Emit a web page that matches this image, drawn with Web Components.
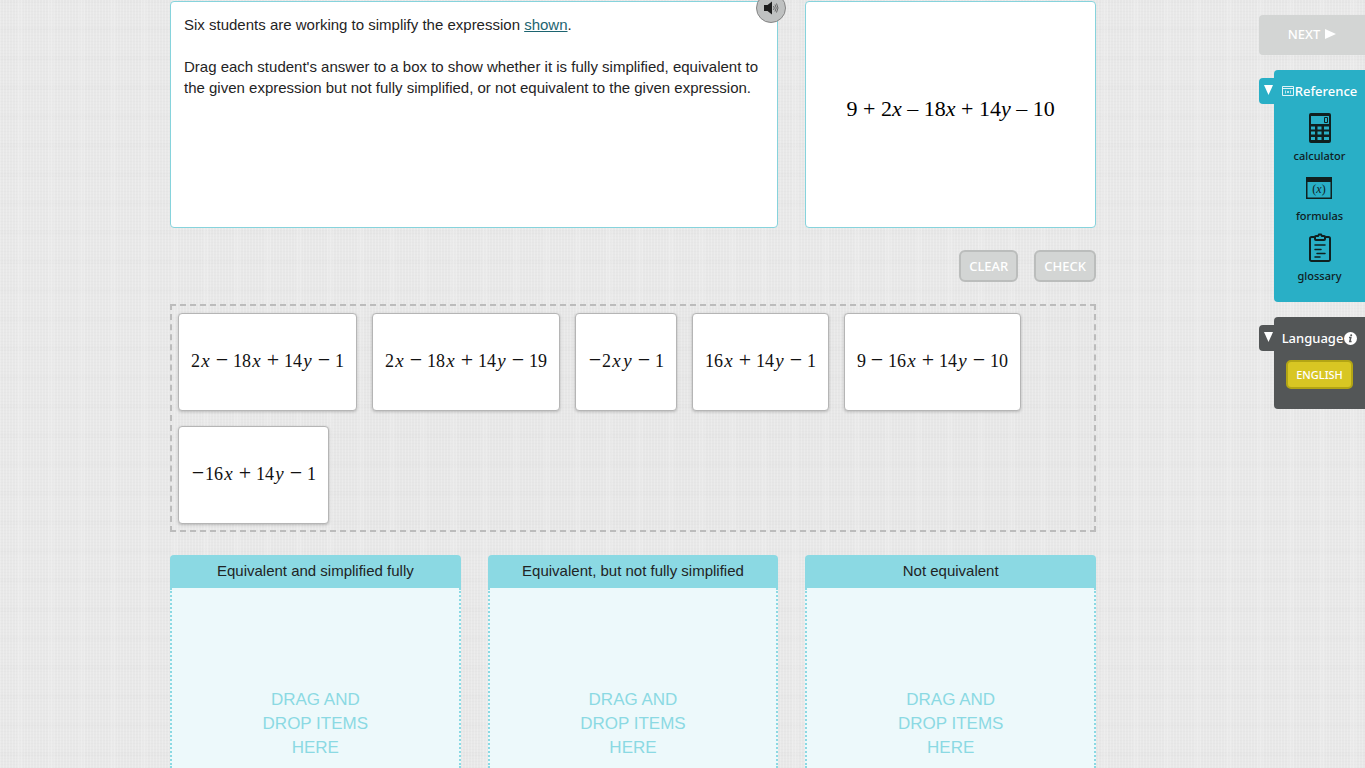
<!DOCTYPE html>
<html lang="en">
<head>
<meta charset="utf-8">
<meta name="viewport" content="width=device-width, initial-scale=1">
<title>Simplify the expression</title>
<style>
  body {
    margin: 0;
    height: 100vh;
    overflow: hidden;
    color: #1f2425;
    font: 15px/21px "Liberation Sans", Arial, sans-serif;
    --ui-font: "Noto Sans", sans-serif;
    --aqua: #8bd9e3;
    /* woven paper: a few thread sets with periods that do not line up */
    background:
      repeating-linear-gradient(90deg, rgba(255,255,255,.2) 0 1px, transparent 1px 3px),
      repeating-linear-gradient(90deg, transparent 0 17px, rgba(255,255,255,.1) 17px 23px, transparent 23px 31px),
      repeating-linear-gradient(0deg, rgba(0,0,0,.012) 0 1px, transparent 1px 3px),
      repeating-linear-gradient(0deg, transparent 0 11px, rgba(0,0,0,.006) 11px 16px, transparent 16px 29px),
      #e8e8e8;
  }
  a { color: #1c6470; }
  p { margin: 0 0 21px; }
</style>
</head>
<body>

<task-page>
  <prompt-panel>
    <p>Six students are working to simplify the expression <a href="#expression">shown</a>.</p>
    <p>Drag each student's answer to a box to show whether it is fully simplified, equivalent to the given expression but not fully simplified, or not equivalent to the given expression.</p>
  </prompt-panel>
  <given-expression id="expression">9 + 2<i>x</i> – 18<i>x</i> + 14<i>y</i> – 10</given-expression>

  <task-button slot="actions">CLEAR</task-button>
  <task-button slot="actions">CHECK</task-button>

  <answer-card slot="answers" expr="2x−18x+14y−1"></answer-card>
  <answer-card slot="answers" expr="2x−18x+14y−19"></answer-card>
  <answer-card slot="answers" expr="−2xy−1"></answer-card>
  <answer-card slot="answers" expr="16x+14y−1"></answer-card>
  <answer-card slot="answers" expr="9−16x+14y−10"></answer-card>
  <answer-card slot="answers" expr="−16x+14y−1"></answer-card>

  <drop-zone slot="zones">Equivalent and simplified fully</drop-zone>
  <drop-zone slot="zones">Equivalent, but not fully simplified</drop-zone>
  <drop-zone slot="zones">Not equivalent</drop-zone>

  <next-button slot="tools">NEXT</next-button>
  <side-panel slot="tools" label="Reference">
    <svg slot="before" width="12" height="10" viewBox="0 0 12 10" fill="none" stroke="#fff" stroke-opacity=".85">
      <path d="M.5.5h11v9H.5zM.5 2.5h11"/>
      <path stroke-width=".8" d="M3.5 4.5v3M8.5 4.5v3M5 5l2 2M7 5L5 7"/>
    </svg>
    <ref-tool name="calculator">
      <svg width="24" height="30" viewBox="0 0 24 30" fill="#10201f">
        <path fill-rule="evenodd" d="M3 0h18a2 2 0 0 1 2 2v26a2 2 0 0 1-2 2H3a2 2 0 0 1-2-2V2a2 2 0 0 1 2-2zM3 3v8h18V3zM3 13.500v3h4v-3zm6.500 0v3h4v-3zm6.500 0v3h5v-3zM3 18.500v3h4v-3zm6.500 0v3h4v-3zm6.500 0v3h5v-3zM3 24v3h4v-3zm6.500 0v3h4v-3zm6.500 0v3h5v-3z"/>
        <path fill="none" stroke="#10201f" d="M16.500 4.500h3v5h-3z"/>
      </svg>
    </ref-tool>
    <ref-tool name="formulas">
      <svg width="26" height="22" viewBox="0 0 26 22">
        <path fill="#10201f" fill-rule="evenodd" d="M0 0h26v22H0zM1.500 5v15.500h23V5z"/>
        <text x="13" y="16" text-anchor="middle" font-family="Liberation Serif, serif" font-size="12" fill="#10201f">(<tspan font-style="italic">x</tspan>)</text>
      </svg>
    </ref-tool>
    <ref-tool name="glossary">
      <svg width="24" height="30" viewBox="0 0 24 30" fill="none" stroke="#10201f" stroke-width="2" stroke-linecap="round">
        <path d="M6 4H3.500A1.500 1.500 0 0 0 2 5.500v21A1.500 1.500 0 0 0 3.500 28h17a1.500 1.500 0 0 0 1.500-1.500v-21A1.500 1.500 0 0 0 20.500 4H18"/>
        <path d="M8 3h2l1-1.500h2L14 3h2a1 1 0 0 1 1 1v2a1 1 0 0 1-1 1H8a1 1 0 0 1-1-1V4a1 1 0 0 1 1-1z"/>
        <path stroke-width="1.500" d="M7 12h10M7 16.500h6M9 20.500h8M7 24h5"/>
      </svg>
    </ref-tool>
  </side-panel>
  <side-panel slot="tools" label="Language" tone="dark">
    <svg slot="after" width="13" height="13" viewBox="0 0 13 13">
      <circle cx="6.500" cy="6.500" r="6.500" fill="#fff"/>
      <path fill="none" stroke="#535657" stroke-width="1.500" d="M5 5.500h1.800L5.800 9.600h1.800"/>
      <circle cx="7.200" cy="3.200" r="1" fill="#535657"/>
    </svg>
    <language-button>ENGLISH</language-button>
  </side-panel>
</task-page>

<script>
class Base extends HTMLElement {
  constructor(){
    super();
    this.attachShadow({mode:'open'})
  }
  connectedCallback(){
    this.shadowRoot.innerHTML = `<style>${this.style_()}</style>${this.html()}`
  }
}

customElements.define('task-page', class extends Base {
  style_(){
    return `
    :host{
      display:grid;
      grid-template-columns:minmax(0, 1fr) 99px;
      height:100%;
    }
    main{
      display:flex;
      flex-direction:column;
      box-sizing:border-box;
      width:100%;
      max-width:926px;
      margin:0 auto;
      padding-top:1px;
    }
    .row{
      display:grid;
      grid-template-columns:repeat(3, minmax(0, 1fr));
      gap:27px;
    }
    .top{ min-height:227px; }
    .actions{
      display:flex;
      justify-content:flex-end;
      gap:16px;
      margin:22px 0;
    }
    .answers{
      display:flex;
      flex-wrap:wrap;
      gap:15px;
      padding:7px 6px 6px;
      border:2px dashed #bcbcbc;
      background:rgba(0,0,0,.005);
    }
    .zones{
      flex:1;
      margin-top:23px;
    }
    /* the tab handles reach over the edge of the column */
    aside{
      justify-self:end;
      display:flex;
      flex-direction:column;
      gap:15px;
      width:106px;
      padding-top:15px;
    }
    `;
  }
  html(){
    return `
    <main>
      <section class="row top"><slot></slot></section>
      <div class="actions"><slot name="actions"></slot></div>
      <section class="answers"><slot name="answers"></slot></section>
      <section class="row zones"><slot name="zones"></slot></section>
    </main>
    <aside><slot name="tools"></slot></aside>
    `;
  }
})

customElements.define('prompt-panel', class extends Base {
  style_(){
    return `
    :host{
      display:block;
      position:relative;
      grid-column:span 2;
      padding:12px 13px;
      background:#fff;
      border:1px solid #86d3dc;
      border-radius:4px;
    }
    button{
      position:absolute;
      top:-9px;
      right:-9px;
      display:grid;
      place-content:center;
      width:30px;
      height:30px;
      padding:0;
      border:1px solid #858585;
      border-radius:50%;
      background:#bfc1c1;
    }
    `;
  }
  html(){
    return `
    <slot></slot>
    <button aria-label="Read aloud">
      <svg width="16" height="14" viewBox="0 0 16 14" fill="none">
        <path fill="#1d1d1d" d="M1 4h3.500L9 .5v13L4.500 10H1z"/>
        <path stroke="#666" d="M10.500 5q1.500 2 0 4M12 3.500q2.500 3.500 0 7M13.500 2.500q3 4.500 0 9"/>
      </svg>
    </button>
    `;
  }
})

customElements.define('given-expression', class extends Base {
  style_(){
    return `
    :host{
      display:flex;
      align-items:center;
      justify-content:center;
      padding-bottom:12px;
      background:#fff;
      border:1px solid #86d3dc;
      border-radius:4px;
      color:#000;
      font:22px/26px "Liberation Serif", "Times New Roman", serif;
    }
    `;
  }
  html(){
    return `<span><slot></slot></span>`;
  }
})

customElements.define('task-button', class extends Base {
  style_(){
    return `
    :host{ display:block; }
    button{
      height:32px;
      padding:0 8px;
      border:2px solid #bbbdbc;
      border-radius:6px;
      background:#d3d5d4;
      color:#fff;
      font:500 13px/20px var(--ui-font);
    }
    `;
  }
  html(){
    return `<button><slot></slot></button>`;
  }
})

customElements.define('answer-card', class extends Base {
  style_(){
    return `
    :host{
      display:flex;
      align-items:center;
      box-sizing:border-box;
      height:98px;
      padding:0 12px 4px;
      background:#fff;
      border:1px solid #b5b5b5;
      border-radius:4px;
      box-shadow:0 1px 3px rgba(0,0,0,.2);
      color:#111;
      font:18px/24px "Liberation Serif", "Times New Roman", serif;
      white-space:nowrap;
      cursor:move;
    }
    i, b{
      display:inline-block;
      width:11px;
      text-align:center;
    }
    i{ font-size:19px; }
    b{
      width:22px;
      font-size:22px;
      font-weight:normal;
    }
    b.sign{ width:14px; }
    `;
  }
  html(){
    let terms = [...this.getAttribute('expr')].map((c, n) => {
      if(/[a-z]/.test(c)) return `<i>${c}</i>`
      if(/[+−]/.test(c)) return `<b class="${n ? 'op' : 'sign'}">${c}</b>`
      return c
    })
    return `<span>${terms.join('')}</span>`;
  }
})

customElements.define('drop-zone', class extends Base {
  style_(){
    return `
    :host{
      display:flex;
      flex-direction:column;
    }
    header{
      padding:5px 6px 7px;
      background:var(--aqua);
      border-radius:4px 4px 0 0;
      text-align:center;
    }
    .area{
      flex:1;
      padding-top:100px;
      background:#edf9fb;
      border:dotted var(--aqua);
      border-width:0 2px;
      color:var(--aqua);
      font-size:17px;
      line-height:24px;
      text-align:center;
    }
    .hint{
      max-width:116px;
      margin:0 auto;
    }
    `;
  }
  html(){
    return `
    <header><slot></slot></header>
    <div class="area"><div class="hint">DRAG AND DROP ITEMS HERE</div></div>
    `;
  }
})

customElements.define('next-button', class extends Base {
  style_(){
    return `
    :host{ display:block; }
    button{
      display:flex;
      align-items:center;
      justify-content:center;
      gap:5px;
      width:100%;
      height:40px;
      padding:0 6px 2px;
      border:0;
      border-radius:4px 0 0 4px;
      background:#d3d5d4;
      color:#fff;
      font:500 13px/20px var(--ui-font);
    }
    `;
  }
  html(){
    return `
    <button><slot></slot>
      <svg width="11" height="10" viewBox="0 0 11 10" fill="#fff"><path d="M0 0l11 5L0 10z"/></svg>
    </button>
    `;
  }
})

customElements.define('side-panel', class extends Base {
  style_(){
    return `
    :host{
      display:flex;
      align-items:flex-start;
      --tone:#29afc6;
    }
    :host([tone=dark]){ --tone:#535657; }
    .tab{
      display:grid;
      place-content:center;
      width:15px;
      height:26px;
      margin-top:8px;
      padding:0 0 2px 4px;
      border:0;
      border-radius:4px 0 0 4px;
      background:var(--tone);
    }
    .tab svg{ overflow:visible; }
    section{
      flex:1;
      display:flex;
      flex-direction:column;
      align-items:center;
      gap:9px;
      padding:11px 0 18px;
      background:var(--tone);
      border-radius:4px 0 0 4px;
    }
    :host([tone=dark]) section{ padding-bottom:20px; }
    header{
      display:flex;
      align-items:center;
      gap:1px;
      margin-bottom:3px;
      color:#fff;
      font:500 13px/20px var(--ui-font);
    }
    `;
  }
  html(){
    let label = this.getAttribute('label')
    return `
    <button class="tab" aria-label="Toggle ${label}">
      <svg width="9" height="10" viewBox="0 0 9 10" fill="#fff"><path d="M0 0h9L4.500 10z"/></svg>
    </button>
    <section>
      <header><slot name="before"></slot><span>${label}</span><slot name="after"></slot></header>
      <slot></slot>
    </section>
    `;
  }
})

customElements.define('ref-tool', class extends Base {
  style_(){
    return `
    :host{ display:block; }
    button{
      display:flex;
      flex-direction:column;
      align-items:center;
      gap:5px;
      padding:0;
      border:0;
      background:none;
      color:#10201f;
      font:500 11px/16px var(--ui-font);
    }
    .icon{
      display:grid;
      place-content:center;
      height:30px;
    }
    `;
  }
  html(){
    return `<button><span class="icon"><slot></slot></span>${this.getAttribute('name')}</button>`;
  }
})

customElements.define('language-button', class extends Base {
  style_(){
    return `
    :host{ display:block; }
    button{
      display:block;
      height:29px;
      padding:0 8px;
      border:2px solid #b3a514;
      border-radius:5px;
      background:#d8c623;
      color:#fff;
      font:500 11px/16px var(--ui-font);
    }
    `;
  }
  html(){
    return `<button><slot></slot></button>`;
  }
})
</script>
</body>
</html>
